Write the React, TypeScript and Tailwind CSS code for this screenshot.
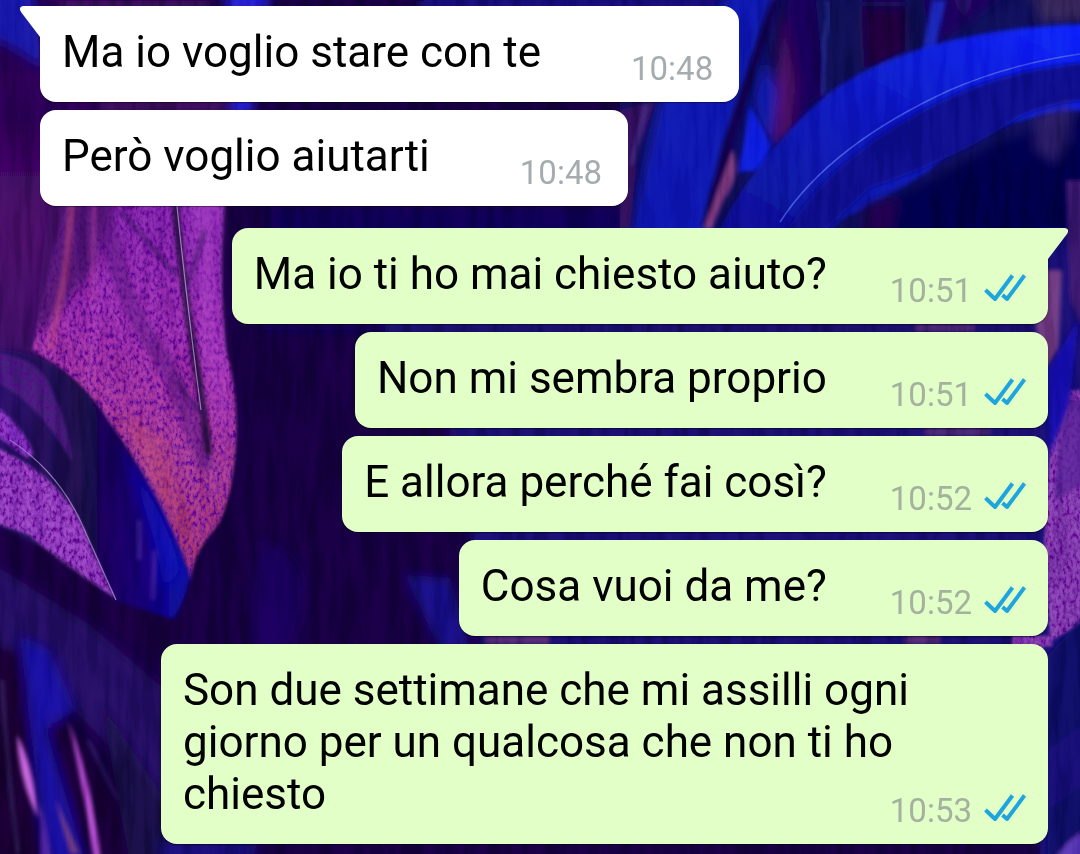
interface Message {
  id: number;
  text: string;
  time: string;
  mine: boolean;
  first?: boolean;
}

const messages: Message[] = [
  { id: 1, text: 'Ma io voglio stare con te', time: '10:48', mine: false, first: true },
  { id: 2, text: 'Però voglio aiutarti', time: '10:48', mine: false },
  { id: 3, text: 'Ma io ti ho mai chiesto aiuto?', time: '10:51', mine: true, first: true },
  { id: 4, text: 'Non mi sembra proprio', time: '10:51', mine: true },
  { id: 5, text: 'E allora perché fai così?', time: '10:52', mine: true },
  { id: 6, text: 'Cosa vuoi da me?', time: '10:52', mine: true },
  {
    id: 7,
    text: 'Son due settimane che mi assilli ogni giorno per un qualcosa che non ti ho chiesto',
    time: '10:53',
    mine: true,
  },
];

function DoubleCheck() {
  return (
    <svg className="w-[42px] h-[30px]" viewBox="0 0 42 30" fill="none" stroke="#1fa5de" role="img" aria-label="Letto">
      <g strokeWidth="4" strokeLinejoin="round">
        <path d="M1.500 17 L11 26 L28.500 2.500" />
        <path d="M18.500 22 L23 26 L40.500 2.500" />
      </g>
    </svg>
  );
}

function Tail({ mine }: { mine: boolean }) {
  return mine ? (
    <svg className="absolute top-0 -right-5 w-8 h-8" viewBox="0 0 32 32" fill="#e1ffc7" aria-hidden="true">
      <path d="M0 0 H29 Q34 1 31 6 L12 31 H0 Z" />
    </svg>
  ) : (
    <svg className="absolute top-0 -left-5 w-8 h-8" viewBox="0 0 32 32" fill="#ffffff" aria-hidden="true">
      <path d="M32 0 H3 Q-2 1 1 6 L20 31 H32 Z" />
    </svg>
  );
}

function Bubble({ message }: { message: Message }) {
  const { text, time, mine, first } = message;
  return (
    <li
      className={`relative flow-root max-w-[88%] rounded-2xl pl-[22px] pt-5 pb-[15px] shadow-[0_1px_1px_rgba(0,0,0,0.4)] ${
        mine ? 'self-end bg-[#e1ffc7] pr-[22px]' : 'self-start bg-white pr-[26px]'
      } ${first ? (mine ? 'mt-[14px] rounded-tr-none' : 'rounded-tl-none') : ''}`}
    >
      {first && <Tail mine={mine} />}
      <div className="relative text-[44px] leading-[52px] text-black">
        {text}
        <span
          className={`float-right mt-[25px] flex items-start gap-3 text-[33px] leading-9 ${
            mine ? 'ml-[63px] text-[#a4b19f]' : 'ml-[90px] text-[#a5acb0]'
          }`}
        >
          <time>{time}</time>
          {mine && <DoubleCheck />}
        </span>
      </div>
    </li>
  );
}

// Painted wallpaper: dark leaves and purple petals
function Wallpaper() {
  return (
    <svg
      className="absolute inset-0 w-full h-full"
      viewBox="0 0 1080 854"
      preserveAspectRatio="xMidYMid slice"
      aria-hidden="true"
    >
      <defs>
        <linearGradient id="petal" x1="0.6" y1="0" x2="0.45" y2="1">
          <stop offset="0" stopColor="#8426ae" />
          <stop offset="0.35" stopColor="#a530b4" />
          <stop offset="0.65" stopColor="#b03c92" />
          <stop offset="1" stopColor="#a8345c" />
        </linearGradient>
        <linearGradient id="leaf" x1="0" y1="0" x2="1" y2="0">
          <stop offset="0" stopColor="#2b126e" />
          <stop offset="0.5" stopColor="#190746" />
          <stop offset="0.8" stopColor="#12057a" />
          <stop offset="1" stopColor="#0a08a8" />
        </linearGradient>
        <linearGradient id="swoosh" x1="0" y1="1" x2="1" y2="0">
          <stop offset="0" stopColor="#080f90" />
          <stop offset="0.5" stopColor="#0b18c0" />
          <stop offset="1" stopColor="#0b22ff" />
        </linearGradient>
        <linearGradient id="dusk" x1="0" y1="0" x2="0" y2="1">
          <stop offset="0" stopColor="#21004e" />
          <stop offset="0.35" stopColor="#2c0355" />
          <stop offset="0.6" stopColor="#480a66" />
          <stop offset="0.85" stopColor="#3c0a64" />
          <stop offset="1" stopColor="#220450" />
        </linearGradient>
        <filter id="soft" x="-20%" y="-20%" width="140%" height="140%">
          <feGaussianBlur stdDeviation="6" />
        </filter>
        <filter id="edge" x="-20%" y="-20%" width="140%" height="140%">
          <feGaussianBlur stdDeviation="2" />
        </filter>
        <filter id="grain" x="-5%" y="-5%" width="110%" height="110%">
          <feTurbulence type="fractalNoise" baseFrequency="0.3 0.18" numOctaves="4" seed="4" result="noise" />
          <feColorMatrix in="noise" type="matrix" values="0 0 0 0 0.12  0 0 0 0 0  0 0 0 0 0.3  0 2.6 0 0 -0.9" result="specks" />
          <feGaussianBlur in="specks" stdDeviation="0.7" result="softSpecks" />
          <feGaussianBlur in="SourceGraphic" stdDeviation="1.5" result="shape" />
          <feComposite in="softSpecks" in2="shape" operator="atop" />
        </filter>
        <filter id="streaks" x="0" y="0" width="100%" height="100%">
          <feTurbulence type="fractalNoise" baseFrequency="0.09 0.012" numOctaves="4" seed="9" />
          <feColorMatrix type="matrix" values="0 3 0 0 -1.1  0 3 0 0 -1.1  0 3 0 0 -1.1  0 0 0 0 1" />
        </filter>
      </defs>

      <rect width="1080" height="854" fill="#15003f" />
      <path d="M-30 -30 H100 L90 200 L60 400 H-30 Z" fill="url(#dusk)" filter="url(#soft)" />
      <g filter="url(#soft)">
        <path d="M-20 -20 H28 Q44 30 44 70 Q20 48 -20 34 Z" fill="#1712a8" />
        <path d="M60 0 H210 V10 H60 Z" fill="#471064" />
        <path d="M100 100 H225 V112 H100 Z" fill="#471064" />
        <path d="M225 -10 H270 L250 120 H232 Z" fill="#211dd0" />
        <path d="M270 205 H640 V330 H260 Z" fill="#100052" />
        <path d="M420 0 H740 V10 H420 Z" fill="#1713a0" />
        <path d="M260 540 Q330 560 290 650 H250 Z" fill="#190558" />
        <path d="M405 575 L450 578 L470 650 H440 Z" fill="#160f86" />
        <path d="M385 320 H1050 V340 H385 Z" fill="#17086c" />
        <path d="M450 425 H1050 V440 H450 Z" fill="#130d78" />
        <path d="M470 530 H1050 V545 H470 Z" fill="#130a80" />
        <path d="M480 634 H1050 V648 H480 Z" fill="#190f78" />
      </g>

      {/* large petal on the left */}
      <path
        d="M68 190 L45 290 L32 350 Q78 374 110 425 Q158 490 190 580 Q196 548 216 528 Q232 505 236 440 Q238 390 226 350 Q218 280 225 190 Z"
        fill="url(#petal)"
        filter="url(#grain)"
      />
      <path d="M50 190 H110 L98 260 L70 300 L34 340 Z" fill="#3c0b62" opacity="0.75" filter="url(#soft)" />
      <path d="M190 200 H222 L216 290 L226 370 L226 460 L208 380 Z" fill="#bb4cd2" opacity="0.4" filter="url(#soft)" />
      <path d="M120 410 L165 440 L195 560 L150 480 Z" fill="#c44b64" opacity="0.4" filter="url(#soft)" />
      <g filter="url(#edge)" fill="none">
        <path d="M106 204 Q116 300 164 360 Q196 430 207 470" stroke="#58147e" strokeWidth="18" opacity="0.5" />
        <path d="M72 204 L65 275 L50 350" stroke="#c0447c" strokeWidth="6" opacity="0.6" />
        <path d="M94 204 L92 300" stroke="#b33b9d" strokeWidth="5" opacity="0.5" />
        <path d="M120 210 L176 275" stroke="#33105e" strokeWidth="3" />
        <path d="M175 200 Q184 300 199 380 L209 455" stroke="#25093f" strokeWidth="7" />
        <path d="M176 380 L202 415 M205 230 L186 290" stroke="#3a1265" strokeWidth="3" />
      </g>
      <path d="M177 206 Q186 295 201 410" fill="none" stroke="#9776b8" strokeWidth="1.2" />

      {/* dark leaf in front of the petal */}
      <path
        d="M-20 350 Q60 342 110 425 Q158 490 190 575 Q186 600 172 622 L-20 560 Z"
        fill="url(#leaf)"
        filter="url(#edge)"
      />
      <path d="M134 470 Q168 520 180 570 L164 590 Q154 520 122 450 Z" fill="#0c10b4" filter="url(#soft)" />
      <path d="M0 354 Q40 358 52 390 Q70 430 72 462 Q40 405 0 384 Z" fill="#46237f" opacity="0.7" filter="url(#grain)" />
      <path d="M-10 402 Q24 425 34 455 L26 458 L-10 430 Z" fill="#8936c9" filter="url(#grain)" />
      <path d="M-10 445 Q52 470 80 520 L114 598 Q56 565 30 535 L-10 522 Z" fill="#9c43c8" filter="url(#grain)" />
      <path d="M-10 520 L50 552 L118 602 L190 625 L175 665 L-10 570 Z" fill="#12033c" filter="url(#edge)" />
      <path d="M10 440 Q56 470 80 520 L116 600" fill="none" stroke="#a68bc8" strokeWidth="1.2" opacity="0.8" />
      <path d="M155 550 L153 600 M139 520 V560" stroke="#4c28a0" strokeWidth="3" filter="url(#edge)" />

      {/* lower left stems */}
      <path d="M-10 562 L90 625 L165 690 V820 Q100 720 -10 640 Z" fill="#220e62" filter="url(#soft)" />
      <g filter="url(#soft)">
        <path d="M-10 650 H20 L40 864 H-10 Z" fill="#14032d" />
        <path d="M20 635 L50 650 L75 710 L46 730 L86 864 H46 Z" fill="#1311a0" />
        <path d="M50 720 L78 735 L150 864 H88 Z" fill="#160334" />
        <path d="M100 700 L165 800 V864 H130 Z" fill="#150944" />
        <path d="M160 842 H260 L250 860 H160 Z" fill="#160f80" />
      </g>
      <g filter="url(#edge)">
        <path d="M17 735 Q32 760 38 818 Q19 780 17 735 Z" fill="#c860e0" />
        <path d="M68 720 Q92 780 101 864 H95 Q84 790 68 720 Z" fill="#bc4cd8" />
        <path d="M40 800 L54 864 H40 Z" fill="#5e2aad" opacity="0.7" />
        <path d="M55 798 L80 854 H70 Z" fill="#703783" />
        <path d="M2 680 Q6 760 18 854" fill="none" stroke="#3a3070" strokeWidth="2" />
        <path d="M88 740 L118 800" stroke="#3e2672" strokeWidth="2" />
      </g>

      {/* blue leaves on the upper right */}
      <path d="M738 -10 H1090 V235 H620 V100 Z" fill="#0b0759" filter="url(#edge)" />
      <g filter="url(#soft)">
        <path d="M730 -10 H775 L730 140 L705 240 H628 L660 100 Z" fill="#0c16b0" />
        <path d="M785 -10 H1010 L925 55 L810 105 L780 180 Z" fill="#130558" />
        <path d="M782 10 L796 80 L790 145 L772 140 Z" fill="#4a0862" />
        <path d="M765 60 L778 90 L770 160 L752 100 Z" fill="#0d12a8" />
        <path d="M815 0 L825 100 H875 L930 45 L925 0 Z" fill="#0d0752" />
        <path d="M862 8 H905 V50 L865 70 Z" fill="#1c0638" />
        <path d="M1030 -10 H1090 V22 H1040 Z" fill="#302057" />
        <path d="M950 -10 H975 L965 25 Z" fill="#260a64" />
      </g>
      <g filter="url(#edge)">
        <path d="M932 0 H946 L934 55 H922 Z" fill="#1220b6" />
        <path d="M780 0 Q752 80 733 150 L712 228 L702 225 L724 140 L772 0 Z" fill="#100546" />
        <path d="M750 105 L771 145 L766 170 L738 172 Z" fill="#0b1bdc" />
        <path d="M620 110 L656 100 L638 150 L630 228 H620 Z" fill="#2d0a58" />
        <path d="M646 105 L632 165" stroke="#4a35a0" strokeWidth="2" />
        <path d="M733 150 Q742 175 724 200 L712 229 H704 Z" fill="#7b397f" />
      </g>
      <path
        d="M716 235 Q760 150 830 92 Q920 28 1090 24 V110 Q985 115 930 170 Q890 198 840 220 L830 235 Z"
        fill="url(#swoosh)"
        filter="url(#edge)"
      />
      <path
        d="M784 235 Q834 150 952 96 Q1015 68 1090 62 V100 Q1030 105 1000 130 Q940 165 870 188 L820 235 Z"
        fill="#080f8c"
        filter="url(#edge)"
      />
      <path d="M780 222 Q830 145 950 90 Q1010 64 1080 54" fill="none" stroke="#4456e4" strokeWidth="1.5" />
      <path d="M826 0 Q832 10 824 40 L822 95" fill="none" stroke="#2e3dbb" strokeWidth="2" filter="url(#edge)" />
      <g filter="url(#soft)">
        <path d="M870 240 L880 200 Q940 180 990 145 L1090 112 V240 Z" fill="#06034a" />
        <path d="M866 205 L900 198 L890 235 H862 Z" fill="#1a0648" />
      </g>
      <path d="M1036 115 L1072 102 L1070 140 L1056 165 L1034 150 Z" fill="#34206a" opacity="0.7" filter="url(#soft)" />

      {/* right edge */}
      <path d="M1040 228 H1090 V864 H1040 Z" fill="#190a72" filter="url(#edge)" />
      <g filter="url(#edge)">
        <path d="M1046 270 H1062 L1058 350 L1046 370 L1036 325 Z" fill="#6d3880" />
        <path d="M1066 180 H1084 V330 L1070 300 Z" fill="#39196c" />
        <path d="M485 636 H550 V644 H485 Z M905 636 H940 V644 H905 Z M915 325 H975 V331 H915 Z M925 429 H990 V435 H925 Z" fill="#51256f" />
      </g>
      <g filter="url(#grain)">
        <path d="M1062 390 H1090 V620 L1052 640 L1040 650 L1020 636 H1050 L1044 540 L1050 450 Z" fill="#8a42b4" />
        <path d="M1012 636 H1052 V646 H1012 Z" fill="#873cb0" />
      </g>
      <g filter="url(#edge)">
        <path d="M1062 400 H1090 V480 L1054 500 Z" fill="#4c2090" opacity="0.7" />
        <path d="M1048 370 L1078 320 L1070 400 L1050 455 Z" fill="#1411ad" />
        <path d="M1090 610 L1048 655 V864 H1090 Z" fill="#0b0865" />
        <path d="M1048 750 L1090 720 V780 L1048 810 Z" fill="#140b75" />
        <path d="M1056 858 Q1068 838 1090 828 V864 Z" fill="#5835b3" />
      </g>

      <rect className="mix-blend-soft-light" width="1080" height="854" filter="url(#streaks)" opacity="0.15" />
    </svg>
  );
}

export default function App() {
  return (
    <main className="relative isolate min-h-screen overflow-hidden bg-[#15003f] font-['Roboto','Liberation_Sans',sans-serif]">
      <Wallpaper />
      <ul className="relative flex flex-col gap-2 pl-10 pr-8 pt-1.5 pb-2.5">
        {messages.map((message) => (
          <Bubble key={message.id} message={message} />
        ))}
      </ul>
    </main>
  );
}
